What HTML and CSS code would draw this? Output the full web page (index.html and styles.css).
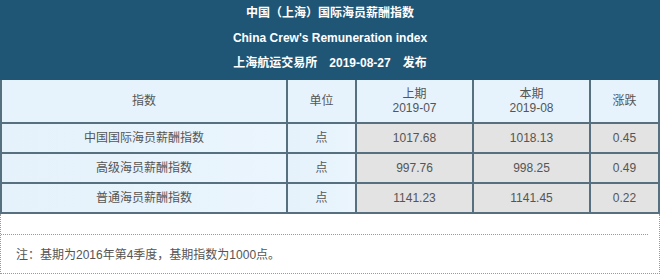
FILE: index.html
```html
<!DOCTYPE html>
<html lang="zh-CN">
<head>
<meta charset="utf-8">
<title>China Crew's Remuneration index</title>
<link rel="stylesheet" href="styles.css">
</head>
<body>
<div class="page">
  <div class="banner">
    <div class="banner-line">中国（上海）国际海员薪酬指数</div>
    <div class="banner-line">China Crew's Remuneration index</div>
    <div class="banner-line">上海航运交易所　2019-08-27　发布</div>
  </div>
  <div class="grid">
    <div class="cell head">指数</div>
    <div class="cell head">单位</div>
    <div class="cell head two"><span>上期</span><span>2019-07</span></div>
    <div class="cell head two"><span>本期</span><span>2019-08</span></div>
    <div class="cell head">涨跌</div>

    <div class="cell name">中国国际海员薪酬指数</div>
    <div class="cell name">点</div>
    <div class="cell num">1017.68</div>
    <div class="cell num">1018.13</div>
    <div class="cell num">0.45</div>

    <div class="cell name">高级海员薪酬指数</div>
    <div class="cell name">点</div>
    <div class="cell num">997.76</div>
    <div class="cell num">998.25</div>
    <div class="cell num">0.49</div>

    <div class="cell name">普通海员薪酬指数</div>
    <div class="cell name">点</div>
    <div class="cell num">1141.23</div>
    <div class="cell num">1141.45</div>
    <div class="cell num">0.22</div>
  </div>
  <div class="note">
    <p class="note-text">注：基期为2016年第4季度，基期指数为1000点。</p>
  </div>
</div>
</body>
</html>
```
FILE: styles.css
```css
* { box-sizing: border-box; }
html, body { margin: 0; padding: 0; background: #ffffff; }
body {
  font-family: "Liberation Sans", "Noto Sans CJK SC", sans-serif;
  font-size: 12px;
  color: #555555;
}
.page { width: 660px; }
.banner {
  background: #1f5575;
  height: 80px;
  padding-top: 1px;
  color: #ffffff;
  font-weight: bold;
  text-align: center;
}
.banner-line {
  height: 25px;
  line-height: 25px;
}
.grid {
  display: grid;
  grid-template-columns: 284px 67px 115px 115px 67px;
  grid-template-rows: 42px 28px 28px 28px;
  gap: 2px;
  padding: 0 2px 2px 2px;
  background: #57707f;
}
.cell {
  display: flex;
  align-items: center;
  justify-content: center;
  text-align: center;
  line-height: 14px;
}
.head { background: #e7f3fc; }
.two { flex-direction: column; }
.name { background: linear-gradient(to right, #e5f2fb, #eaf5fd); }
.num { background: #e3e3e3; }
.note {
  height: 60px;
  border: 1px dotted #9a9a9a;
  border-top: none;
  padding-top: 20px;
}
.note-text {
  margin: 0 11px 0 0;
  border-top: 1px dotted #9a9a9a;
  padding: 12px 0 0 15px;
  line-height: 16px;
}
```
